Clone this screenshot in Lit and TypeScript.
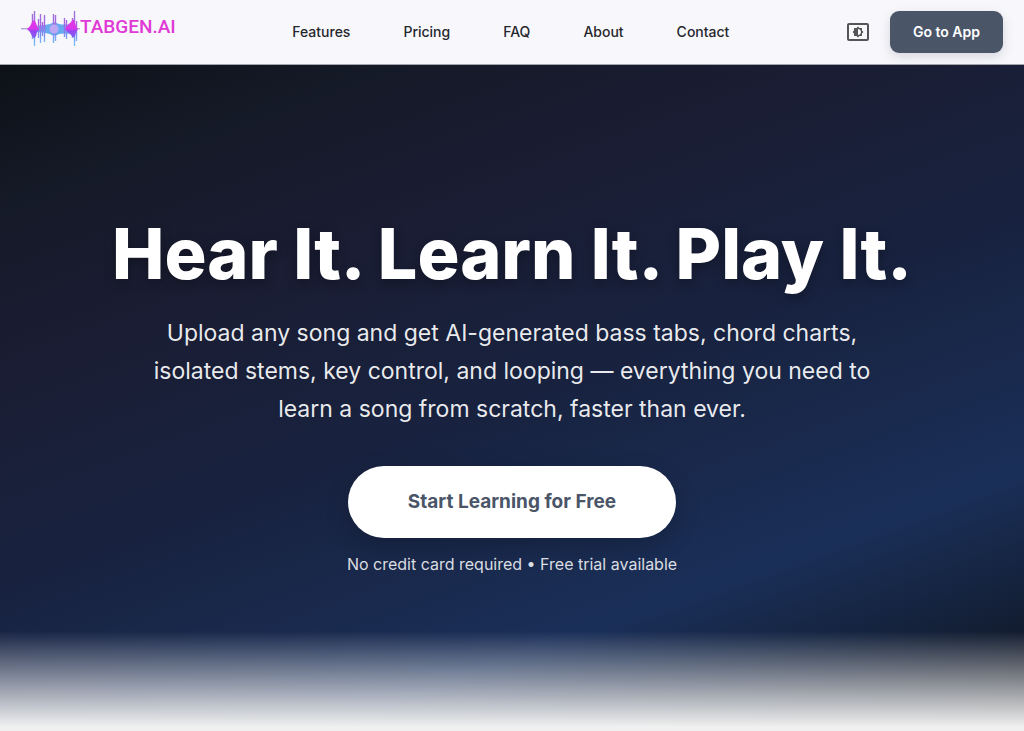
import { LitElement, html, css, svg } from "lit";
import { customElement } from "lit/decorators.js";

const NAV_ITEMS = ["Features", "Pricing", "FAQ", "About", "Contact"];

// Vertical bars of the waveform mark: x, top, bottom.
const BARS: Array<[number, number, number]> = [
  [11, 4, 29], [13, 1, 36], [17, 9, 28], [19, 4, 33], [21, 12, 26], [23, 5, 32],
  [32, 4, 33], [34, 5, 31], [43, 8, 27], [45, 10, 29],
  [51, 8, 28], [53, 1, 36], [55, 11, 31],
];

@customElement("tab-logo")
class TabLogo extends LitElement {
  static styles = css`
    :host { display: block; }
    .logo { display: flex; align-items: flex-start; color: #e03ad6; text-decoration: none; }
    .mark { display: block; width: 59px; height: 38px; }
    .name { font: 500 19px/34px Roboto, sans-serif; }
  `;
  render() {
    return html`<a class="logo" href="#">
      <svg class="mark" viewBox="0 0 59 38" aria-hidden="true">
        <defs>
          <linearGradient id="wave" x1="0" y1="0" x2="0" y2="38" gradientUnits="userSpaceOnUse">
            <stop offset="0" stop-color="#9a78d0" />
            <stop offset=".42" stop-color="#a860e4" />
            <stop offset=".62" stop-color="#7d8cf0" />
            <stop offset="1" stop-color="#79cdf7" />
          </linearGradient>
          <linearGradient id="peak" x1="0" y1="9" x2="0" y2="29" gradientUnits="userSpaceOnUse">
            <stop offset="0" stop-color="#e03be6" />
            <stop offset=".5" stop-color="#d935ea" />
            <stop offset=".58" stop-color="#9a45f2" />
            <stop offset="1" stop-color="#7d5df0" />
          </linearGradient>
        </defs>
        <path d="M0 18.8H59" stroke="#9b80cc" stroke-width="1" />
        <path d="M15 16Q24 15 29 14Q33 11 38 14Q43 15 51 14V24Q43 23 38 24Q33 27 29 24Q22 22 15 22Z" fill="#67aaf0" />
        ${BARS.map(([x, top, bottom]) => svg`<path d="M${x + 0.5} ${top}V${bottom}" stroke="url(#wave)" stroke-width="1.4" />`)}
        <path d="M6 19Q10 16 11 12Q13 8 15 13Q16 17 18 19Q16 21 15 26Q13 30 11 26Q9 21 6 19Z" fill="url(#peak)" />
        <path d="M44 19Q47 14 50 12Q53 7 54 13Q55 17 57 19Q55 21 54 26Q53 29 50 25Q47 22 44 19Z" fill="url(#peak)" />
        <ellipse cx="33" cy="19" rx="4.5" ry="4.5" fill="#c0a7f3" />
      </svg>
      <span class="name">TABGEN.AI</span>
    </a>`;
  }
}

@customElement("site-header")
class SiteHeader extends LitElement {
  static styles = css`
    :host { display: block; }
    .bar {
      display: flex; align-items: center; justify-content: space-between;
      box-sizing: border-box; height: 65px; padding: 0 21px;
      background: #f8f8fc; border-bottom: 1px solid #a3a4ac;
    }
    .brand { align-self: flex-start; padding-top: 10px; }
    .links { display: flex; gap: 53px; }
    .link { color: #26272c; font-size: 14px; font-weight: 500; line-height: 20px; text-decoration: none; }
    .actions { display: flex; align-items: center; gap: 20px; }
    .theme { display: block; padding: 0; border: 0; background: none; color: #555; cursor: pointer; }
    .theme svg { display: block; width: 24px; height: 24px; }
    .app {
      padding: 11px 23px; border: 0; border-radius: 9px; background: #4a5568; color: #fff;
      font: 600 14px/20px Inter, sans-serif; cursor: pointer;
      box-shadow: 0 4px 12px rgba(74, 85, 104, 0.2);
    }
  `;
  render() {
    return html`<header class="bar">
      <tab-logo class="brand"></tab-logo>
      <nav class="links" aria-label="Main">
        ${NAV_ITEMS.map((item) => html`<a class="link" href="#${item.toLowerCase()}">${item}</a>`)}
      </nav>
      <div class="actions">
        <button class="theme" aria-label="Toggle theme">
          <svg viewBox="0 0 24 24" fill="currentColor" aria-hidden="true">
            <path d="M21 3H3c-1.1 0-2 .9-2 2v14c0 1.1.9 2 2 2h18c1.1 0 2-.9 2-2V5c0-1.1-.9-2-2-2zm0 16.01H3V4.99h18v14.02zM8 16h2.5l1.5 1.5 1.5-1.5H16v-2.5l1.5-1.5-1.5-1.5V8h-2.5L12 6.5 10.5 8H8v2.5L6.5 12 8 13.5V16zm4-7c1.66 0 3 1.34 3 3s-1.34 3-3 3V9z" />
          </svg>
        </button>
        <button class="app">Go to App</button>
      </div>
    </header>`;
  }
}

@customElement("hero-section")
class HeroSection extends LitElement {
  static styles = css`
    :host { display: flex; flex-direction: column; }
    .hero {
      flex: 1; display: flex; flex-direction: column; align-items: center;
      box-sizing: border-box; padding: 146px 24px 150px; text-align: center;
      background:
        linear-gradient(to bottom, rgba(240, 240, 240, 0), #f0f0f0 96px) bottom / 100% 100px no-repeat,
        linear-gradient(160deg, #0d1117 0%, #151a28 14%, #1a1d33 29%, #18223f 50%, #1a2f58 75%, #0d1117 100%);
    }
    .title {
      margin: 0; color: #fff; font-size: 70px; font-weight: 800; line-height: 86px;
      text-shadow: 0 4px 12px rgba(0, 0, 0, 0.3);
    }
    .lead {
      max-width: 740px; margin: 17px 0 0; color: rgba(255, 255, 255, 0.92);
      font-size: 23px; font-weight: 400; line-height: 38px;
    }
    .cta {
      margin-top: 38px; padding: 24px 60px; border: 0; border-radius: 36px;
      background: #fff; color: #4a5568; font: 700 19px/24px Inter, sans-serif; cursor: pointer;
      box-shadow: 0 8px 24px rgba(0, 0, 0, 0.2);
    }
    .note { margin: 14px 0 0; color: rgba(255, 255, 255, 0.85); font-size: 16px; font-weight: 400; line-height: 24px; }
  `;
  render() {
    return html`<main class="hero">
      <h1 class="title">Hear It. Learn It. Play It.</h1>
      <p class="lead">Upload any song and get AI-generated bass tabs, chord charts, isolated stems, key control, and looping — everything you need to learn a song from scratch, faster than ever.</p>
      <button class="cta">Start Learning for Free</button>
      <p class="note">No credit card required • Free trial available</p>
    </main>`;
  }
}

@customElement("app-root")
class AppRoot extends LitElement {
  static styles = css`
    :host { display: flex; flex-direction: column; min-height: 100vh; font-family: Inter, sans-serif; }
    .hero { flex: 1; }
  `;
  render() {
    return html`<site-header></site-header><hero-section class="hero"></hero-section>`;
  }
}
